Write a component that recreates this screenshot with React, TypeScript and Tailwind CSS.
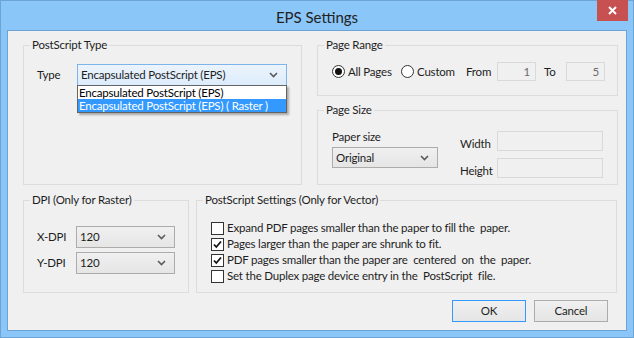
import { useState } from "react";

const font = { fontFamily: 'Lato, "Noto Sans", sans-serif' };

function Chevron() {
  return (
    <svg width="9" height="6" viewBox="0 0 9 6" className="shrink-0">
      <path d="M1 1l3.5 3.5L8 1" fill="none" stroke="#5a5a5a" strokeWidth="1.6" />
    </svg>
  );
}

function Group({ title, className, children }: { title: string; className: string; children?: React.ReactNode }) {
  return (
    <div className={`relative border border-[#dcdcdc] ${className}`}>
      <span className="absolute -top-[9px] left-[6px] bg-[#f0f0f0] px-[2px] leading-[16px] text-[#1e1e1e]">
        {title}
      </span>
      {children}
    </div>
  );
}

function Combo({ value, className }: { value: string; className: string }) {
  return (
    <div className={`flex items-center justify-between border border-[#acacac] bg-gradient-to-b from-[#f0f0f0] to-[#e5e5e5] pl-[3px] pr-[8px] ${className}`}>
      <span className="leading-[16px]">{value}</span>
      <Chevron />
    </div>
  );
}

function Field({ value, className }: { value?: string; className: string }) {
  return (
    <div className={`flex items-center justify-end border border-[#d9d9d9] bg-[#f0f0f0] pr-[5px] text-[#6d6d6d] ${className}`}>
      {value}
    </div>
  );
}

function Check({ checked, label }: { checked: boolean; label: string }) {
  return (
    <div className="flex h-[16px] items-center">
      <span className="flex h-[13px] w-[13px] shrink-0 items-center justify-center border border-[#333] bg-white">
        {checked && (
          <svg width="9" height="9" viewBox="0 0 9 9">
            <path d="M1 4.5l2.3 2.5L8 1.5" fill="none" stroke="#111" strokeWidth="1.8" />
          </svg>
        )}
      </span>
      <span className="ml-[3px] whitespace-pre leading-[16px]">{label}</span>
    </div>
  );
}

function Radio({ checked, label, className }: { checked: boolean; label: string; className: string }) {
  return (
    <div className={`flex items-center ${className}`}>
      <span className="flex h-[13px] w-[13px] shrink-0 items-center justify-center rounded-full border border-[#333] bg-white">
        {checked && <span className="h-[7px] w-[7px] rounded-full bg-[#111]" />}
      </span>
      <span className="ml-[3px] whitespace-nowrap">{label}</span>
    </div>
  );
}

export default function App() {
  const [open] = useState(true);

  return (
    <div className="h-[338px] w-[634px] overflow-hidden text-[11.5px] tracking-[-0.2px] text-[#1e1e1e]" style={font}>
      <div className="flex h-full w-full flex-col border border-[#6ea3d6] bg-[#8bc6f8]">
        {/* Title bar */}
        <div className="relative flex h-[29px] shrink-0 items-center justify-center">
          <span className="mt-[3px] text-[15px] leading-[20px] tracking-normal text-[#222]">EPS Settings</span>
          <button className="absolute right-[5px] top-[-1px] flex h-[21px] w-[31px] items-center justify-center bg-[#c75050]">
            <svg width="9" height="9" viewBox="0 0 9 9">
              <path d="M1 1l7 7M8 1l-7 7" stroke="white" strokeWidth="2" />
            </svg>
          </button>
        </div>

        {/* Client area */}
        <div className="ml-[6px] mr-[6px] h-[301px] border border-[#6ea3d6] bg-[#f0f0f0] pl-[15px] pt-[14px]">
          <div className="flex gap-[15px]">
            <Group title="PostScript Type" className="h-[140px] w-[279px]">
              <div className="flex items-center pl-[13px] pt-[18px]">
                <span className="w-[40px]">Type</span>
                <div className="relative">
                  <div className="flex h-[22px] w-[210px] items-center justify-between border border-[#7eb4ea] bg-gradient-to-b from-[#ecf4fc] to-[#dcecfc] pl-[3px] pr-[8px]">
                    <span className="whitespace-nowrap">Encapsulated PostScript (EPS)</span>
                    <Chevron />
                  </div>
                  {open && (
                    <div className="absolute left-0 top-[21px] z-10 w-[210px] border border-[#646464] bg-white shadow-[2px_2px_2px_rgba(0,0,0,0.3)]">
                      <div className="flex h-[13px] items-center whitespace-nowrap pl-[1px] leading-[12px] text-black">Encapsulated PostScript (EPS)</div>
                      <div className="flex h-[13px] items-center whitespace-nowrap bg-[#3399ff] pl-[1px] leading-[12px] text-white">Encapsulated PostScript (EPS) ( Raster )</div>
                    </div>
                  )}
                </div>
              </div>
            </Group>

            <div className="flex w-[301px] flex-col gap-[14px]">
              <Group title="Page Range" className="h-[51px]">
                <div className="flex items-center pl-[14px] pt-[16px]">
                  <Radio checked label="All Pages" className="w-[69px]" />
                  <Radio checked={false} label="Custom" className="w-[65px]" />
                  <span className="w-[31px]">From</span>
                  <Field value="1" className="h-[19px] w-[39px]" />
                  <span className="ml-[8px] w-[22px]">To</span>
                  <Field value="5" className="h-[19px] w-[39px]" />
                </div>
              </Group>

              <Group title="Page Size" className="h-[75px]">
                <div className="flex pl-[14px] pt-[18px]">
                  <div className="flex w-[128px] flex-col">
                    <span className="leading-[16px]">Paper size</span>
                    <Combo value="Original" className="mt-[2px] h-[21px] w-[106px]" />
                  </div>
                  <div className="flex flex-col gap-[4px]">
                    <div className="flex items-center">
                      <span className="w-[37px] pt-[6px]">Width</span>
                      <Field className="h-[20px] w-[106px]" />
                    </div>
                    <div className="flex items-center">
                      <span className="w-[37px] pt-[6px]">Height</span>
                      <Field className="h-[20px] w-[106px]" />
                    </div>
                  </div>
                </div>
              </Group>
            </div>
          </div>

          <div className="mt-[15px] flex gap-[7px]">
            <Group title="DPI (Only for Raster)" className="h-[93px] w-[166px]">
              <div className="flex flex-col gap-[4px] pl-[13px] pt-[25px]">
                <div className="flex items-center">
                  <span className="w-[39px]">X-DPI</span>
                  <Combo value="120" className="h-[22px] w-[99px]" />
                </div>
                <div className="flex items-center">
                  <span className="w-[39px]">Y-DPI</span>
                  <Combo value="120" className="h-[22px] w-[99px]" />
                </div>
              </div>
            </Group>

            <Group title="PostScript Settings (Only for Vector)" className="h-[93px] w-[421px]">
              <div className="flex flex-col pl-[14px] pt-[19px]">
                <Check checked={false} label="Expand PDF pages smaller than the paper to fill the  paper." />
                <Check checked label="Pages larger than the paper are shrunk to fit." />
                <Check checked label="PDF pages smaller than the paper are  centered  on  the  paper." />
                <Check checked={false} label="Set the Duplex page device entry in the  PostScript  file." />
              </div>
            </Group>
          </div>

          <div className="mt-[7px] flex justify-end gap-[8px] pr-[18px]">
            <button className="h-[22px] w-[74px] border border-[#3399ff] bg-gradient-to-b from-[#f0f0f0] to-[#e5e5e5]">OK</button>
            <button className="h-[22px] w-[74px] border border-[#acacac] bg-gradient-to-b from-[#f0f0f0] to-[#e5e5e5]">Cancel</button>
          </div>
        </div>
      </div>
    </div>
  );
}
